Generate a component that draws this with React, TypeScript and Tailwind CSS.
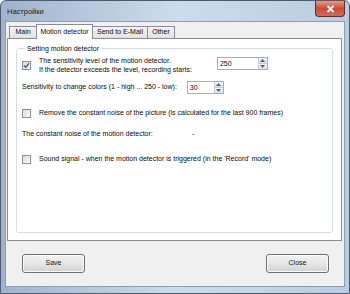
import React from "react";

type CheckProps = { checked?: boolean };

function Check({ checked }: CheckProps) {
  return (
    <span className="flex h-[9px] w-[9px] shrink-0 items-center justify-center border border-[#8f8f8f] bg-gradient-to-br from-[#dcdcdc] to-[#fafafa]">
      {checked && (
        <svg width="7" height="7" viewBox="0 0 7 7" aria-hidden>
          <path d="M1 3.6 L2.8 5.4 L6 1.2" fill="none" stroke="#3c5a96" strokeWidth="1.4" />
        </svg>
      )}
    </span>
  );
}

function Spin({ value, width }: { value: string; width: string }) {
  return (
    <div className={`flex h-[13px] ${width} border border-[#abadb3] bg-white`}>
      <span className="flex-1 pl-[2px] leading-[11px]">{value}</span>
      <div className="flex w-[9px] flex-col border-l border-[#c7cbd1]">
        <span className="flex flex-1 items-center justify-center bg-gradient-to-b from-[#f4f6f8] to-[#dde3ea]">
          <svg width="5" height="3" viewBox="0 0 5 3" aria-hidden>
            <path d="M0 3 L2.5 0 L5 3 Z" fill="#4d6185" />
          </svg>
        </span>
        <span className="flex flex-1 items-center justify-center border-t border-[#c7cbd1] bg-gradient-to-b from-[#f4f6f8] to-[#dde3ea]">
          <svg width="5" height="3" viewBox="0 0 5 3" aria-hidden>
            <path d="M0 0 L2.5 3 L5 0 Z" fill="#4d6185" />
          </svg>
        </span>
      </div>
    </div>
  );
}

const tabIdle =
  "mt-[2px] flex h-[12px] items-center justify-center border-t border-[#898c95] bg-gradient-to-b from-[#f3f3f3] to-[#e3e3e3]";

function Button({ label }: { label: string }) {
  return (
    <button className="flex h-[19px] w-[63px] items-center justify-center rounded-[3px] border border-[#707070] bg-gradient-to-b from-[#f2f2f2] via-[#e6e6e6] to-[#d2d2d2] text-[7px] text-[#111] shadow-[inset_0_0_0_1px_#fbfbfb]">
      {label}
    </button>
  );
}

export default function App() {
  return (
    <div
      className="flex h-[294px] w-[350px] flex-col rounded-t-[6px] border border-[#4b5b70] bg-gradient-to-r from-[#9fb4cc] via-[#cddcec] to-[#b8cde2] text-[7px] text-[#0a0a0a]"
      style={{ fontFamily: '"Liberation Sans", Arial, sans-serif' }}
    >
      <div className="flex h-[20px] shrink-0 items-start">
        <span className="pl-[6px] pt-[5px] text-[7.5px] text-[#1b1b1b]">Настройки</span>
        <div className="ml-auto mr-[4px] flex h-[16px] w-[30px] items-center justify-center rounded-b-[4px] border border-t-0 border-[#6b2a22] bg-gradient-to-b from-[#e4998a] via-[#c9493a] to-[#cf6b57]">
          <svg width="9" height="8" viewBox="0 0 9 8" aria-hidden>
            <path d="M1.5 1 L7.5 7 M7.5 1 L1.5 7" stroke="#ffffff" strokeWidth="1.8" />
          </svg>
        </div>
      </div>

      <div className="mx-[4px] mb-[6px] flex flex-1 flex-col border border-[#8a9db3] bg-[#f0f0f0]">
        <div className="ml-px mr-[2px] mt-[2px] flex flex-col">
          <div className="flex pl-[2px]">
            <div className={`${tabIdle} w-[27px] border-l`}>Main</div>
            <div className="relative z-10 -mb-px flex h-[15px] w-[57px] items-center justify-center border border-b-0 border-[#898c95] bg-white">
              Motion detector
            </div>
            <div className={`${tabIdle} w-[55px] border-r`}>Send to E-Mail</div>
            <div className={`${tabIdle} w-[27px] border-r`}>Other</div>
          </div>

          <div className="flex h-[203px] flex-col border border-[#898c95] bg-white px-[8px] pt-[5px]">
            <fieldset className="flex h-[189px] flex-col rounded-[3px] border border-[#d5dfe5] pl-[5px] pr-[6px]">
              <legend className="ml-[3px] px-[2px] leading-[9px]">Setting motion detector</legend>

              <div className="mt-[3px] flex items-center">
                <Check checked />
                <div className="ml-[8px] flex flex-col leading-[9px]">
                  <span>The sensitivity level of the motion detector.</span>
                  <span>If the detector exceeds the level, recording starts:</span>
                </div>
                <div className="ml-[25px] mt-[-3px]">
                  <Spin value="250" width="w-[51px]" />
                </div>
              </div>

              <div className="mt-[7px] flex items-center">
                <span>Sensitivity to change colors (1 - high ... 250 - low):</span>
                <div className="ml-[10px]">
                  <Spin value="30" width="w-[37px]" />
                </div>
              </div>

              <div className="mt-[14px] flex items-center">
                <Check />
                <span className="ml-[8px]">
                  Remove the constant noise of the picture (is calculated for the last 900 frames)
                </span>
              </div>

              <div className="mt-[10px] flex items-center">
                <span className="w-[170px]">The constant noise of the motion detector:</span>
                <span>-</span>
              </div>

              <div className="mt-[15px] flex items-center">
                <Check />
                <span className="ml-[8px]">
                  Sound signal - when the motion detector is triggered (in the 'Record' mode)
                </span>
              </div>
            </fieldset>
          </div>
        </div>

        <div className="flex flex-1 items-center justify-between pl-[16px] pr-[15px]">
          <Button label="Save" />
          <Button label="Close" />
        </div>
      </div>
    </div>
  );
}
